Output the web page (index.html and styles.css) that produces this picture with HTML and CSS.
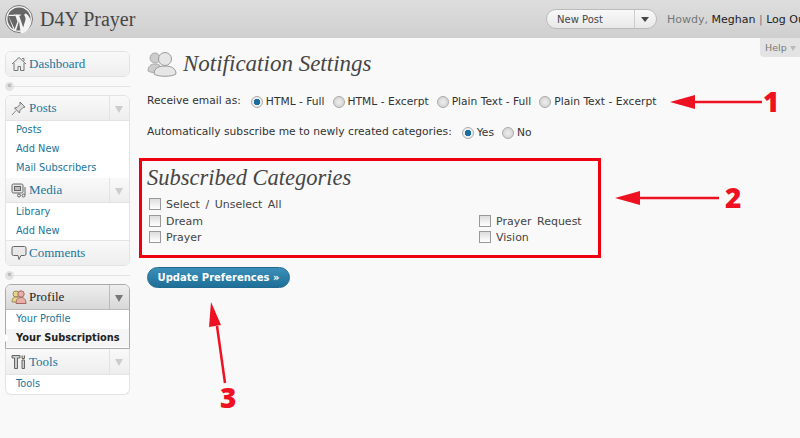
FILE: index.html
```html
<!DOCTYPE html>
<html lang="en">
<head>
    <meta charset="UTF-8">
    <meta name="viewport" content="width=device-width, initial-scale=1.0">
    <title>Notification Settings</title>
    <link rel="stylesheet" href="styles.css">
</head>
<body>
    <header class="topbar">
        <svg class="wp-logo" width="28" height="28" viewBox="0 0 28 28">
            <circle cx="14" cy="14" r="13.5" fill="#f4f4f4" stroke="#777"/>
            <circle cx="14" cy="14" r="11.5" fill="#666"/>
            <path d="M3 10l6 16 3.400-9.600-2-5.600-1.600-.2v-1h7v1l-1.600.2 4 11.600 2.200-7.400c.6-2.200-.6-3.600-1-4.400-.4-.8.2-2.200 1.600-2.200 3 2.200 4.600 5 4.600 8.600 0 5.600-3.800 10.600-9.800 12L14 16l-3.200 10.400" fill="#f4f4f4"/>
            <path d="M3.500 9.800h6.300v1.200h-6.300z" fill="#f4f4f4"/>
        </svg>
        <span class="site-name">D4Y Prayer</span>
        <div class="favorites">
            <span class="fav-label">New Post</span>
            <span class="fav-toggle"></span>
        </div>
        <div class="howdy">Howdy, <b>Meghan</b> | <b>Log Out</b></div>
    </header>

    <div class="wrap">
        <nav class="sidebar">
            <div class="menu-group">
                <div class="menu-head single">
                    <svg class="menu-icon" width="16" height="16" viewBox="0 0 16 16" fill="#eee" stroke="#777"><path d="M1 8l7-6.500 7 6.500M3 7v7.500h4v-4h2.500v4h3.500V7"/><path d="M11 2.500h2v2.500"/></svg>
                    <span>Dashboard</span>
                </div>
            </div>
            <div class="collapse-line"><span class="collapse-btn">«</span></div>

            <div class="menu-group">
                <div class="menu-head">
                    <svg class="menu-icon" width="16" height="16" viewBox="0 0 16 16"><path d="M9 2l5 5-2 .5-3 3-.5 2.500-5-5 2.500-.5 3-3z" fill="#ddd" stroke="#777"/><path d="M5 10.500l-4 4.500" stroke="#888"/></svg>
                    <span>Posts</span><i class="arrow-box"></i>
                </div>
                <ul class="submenu first-list">
                    <li>Posts</li>
                    <li>Add New</li>
                    <li>Mail Subscribers</li>
                </ul>
                <div class="menu-head">
                    <svg class="menu-icon" width="16" height="16" viewBox="0 0 16 16" fill="#e4e4e4" stroke="#666"><rect x="1" y="2" width="11" height="9" rx="1.500"/><rect x="3.500" y="4.500" width="6" height="4" fill="#bbb"/><path d="M14 5v8" fill="none"/><circle cx="12.500" cy="13.500" r="1.500"/><circle cx="8" cy="13.500" r="1.500"/></svg>
                    <span>Media</span><i class="arrow-box"></i>
                </div>
                <ul class="submenu">
                    <li>Library</li>
                    <li>Add New</li>
                </ul>
                <div class="menu-head single-low">
                    <svg class="menu-icon" width="16" height="16" viewBox="0 0 16 16"><path d="M2.500 1.500h11a1.500 1.500 0 0 1 1.500 1.500v6a1.500 1.500 0 0 1-1.500 1.500H10l-2 4-1-4H2.500A1.500 1.500 0 0 1 1 9V3a1.500 1.500 0 0 1 1.500-1.500z" fill="#e8e8e8" stroke="#666"/></svg>
                    <span>Comments</span>
                </div>
            </div>
            <div class="collapse-line second"><span class="collapse-btn">«</span></div>

            <div class="menu-group open-group">
                <div class="menu-head current">
                    <svg class="menu-icon" width="16" height="16" viewBox="0 0 16 16"><circle cx="5" cy="5" r="3" fill="#e8d58c" stroke="#a08a50"/><path d="M1 13c0-4 2-5 4-5s3 1 3 5z" fill="#e8d58c" stroke="#a08a50"/><circle cx="10" cy="5" r="3.200" fill="#eab0a8" stroke="#a06a60"/><path d="M5 14.500c0-4.500 2.500-6 5-6s5 1.500 5 6z" fill="#eab0a8" stroke="#a06a60"/></svg>
                    <span>Profile</span><i class="arrow-box"></i>
                </div>
                <ul class="submenu">
                    <li>Your Profile</li>
                    <li class="active">Your Subscriptions</li>
                </ul>
            </div>

            <div class="menu-group tools-group">
                <div class="menu-head">
                    <svg class="menu-icon" width="16" height="16" viewBox="0 0 16 16" fill="#ccc" stroke="#666"><path d="M1 1.500h8v2.500H6.500v10.500h-3V4H1z"/><path d="M11 6h2.500v8.500H11z"/><path d="M11 1.500v3h2.500v-3"/></svg>
                    <span>Tools</span><i class="arrow-box"></i>
                </div>
                <ul class="submenu">
                    <li>Tools</li>
                </ul>
            </div>
        </nav>

        <main class="content">
            <div class="help-tab">Help <i></i></div>
            <div class="page-title">
                <svg width="30" height="28" viewBox="0 0 30 28">
                    <circle cx="8" cy="8" r="5" fill="#ccc" stroke="#aaa"/>
                    <path d="M1 21c0-5 3-7 7-7s7 2 7 7c-3 2-11 2-14 0z" fill="#ccc" stroke="#aaa"/>
                    <circle cx="18" cy="9" r="6.500" fill="#e6e6e6" stroke="#999"/>
                    <path d="M7 24c0-6 5-8 11-8s11 2 11 8c-4 3-18 3-22 0z" fill="#e6e6e6" stroke="#999"/>
                </svg>
                <h2>Notification Settings</h2>
            </div>

            <div class="option-row">
                <span class="option-label">Receive email as:</span>
                <span class="radio on"></span><span class="radio-text">HTML - Full</span>
                <span class="radio"></span><span class="radio-text">HTML - Excerpt</span>
                <span class="radio"></span><span class="radio-text">Plain Text - Full</span>
                <span class="radio"></span><span class="radio-text">Plain Text - Excerpt</span>
            </div>
            <div class="option-row second-row">
                <span class="option-label">Automatically subscribe me to newly created categories:</span>
                <span class="radio on"></span><span class="radio-text">Yes</span>
                <span class="radio"></span><span class="radio-text">No</span>
            </div>

            <section class="categories">
                <h3>Subscribed Categories</h3>
                <div class="check-row select-all"><span class="check"></span>Select / Unselect All</div>
                <div class="check-grid">
                    <div class="check-row"><span class="check"></span>Dream</div>
                    <div class="check-row"><span class="check"></span>Prayer Request</div>
                    <div class="check-row"><span class="check"></span>Prayer</div>
                    <div class="check-row"><span class="check"></span>Vision</div>
                </div>
            </section>

            <button class="update-btn">Update Preferences »</button>
        </main>
    </div>

    <!-- red notes drawn over the screenshot -->
    <svg class="notes" width="800" height="438" viewBox="0 0 800 438">
        <g fill="#ee1122" stroke="#ee1122">
            <path d="M695 102H762" stroke-width="2.500"/>
            <path d="M670 102l25-7v14z" stroke="none"/>
            <path d="M640 198H719" stroke-width="2.500"/>
            <path d="M615 198l25-7v14z" stroke="none"/>
            <path d="M225 383L217 326" stroke-width="2.500" fill="none"/>
            <path d="M211 302L209 327l12-2z" stroke="none"/>
        </g>
        <g class="note-nums">
            <text x="763" y="112">1</text>
            <text x="725" y="208">2</text>
            <text x="220" y="408">3</text>
        </g>
    </svg>
</body>
</html>
```

FILE: styles.css
```css
* { box-sizing: border-box; }
html, body { margin: 0; height: 438px; overflow: hidden; }
body { background: #f9f9f9; font-family: "DejaVu Sans", Verdana, sans-serif; font-size: 11px; color: #333; position: relative; }

.topbar { height: 38px; display: flex; align-items: center; background: linear-gradient(#dedede, #cfcfcf); padding-left: 5px; }
.wp-logo { flex: none; }
.site-name { font-family: "Liberation Serif", Georgia, serif; font-size: 20px; color: #464646; margin-left: 7px; }
.favorites { margin-left: auto; width: 111px; height: 20px; display: flex; align-items: center; border: 1px solid #bbb; border-radius: 10px; background: linear-gradient(#f9f9f9, #e8e8e8); color: #464646; font-size: 10px; }
.fav-label { flex: 1; padding-left: 10px; }
.fav-toggle { width: 22px; height: 18px; border-left: 1px solid #ccc; position: relative; }
.fav-toggle::after { content: ""; position: absolute; left: 6px; top: 7px; border: 4px solid transparent; border-top: 5px solid #464646; border-bottom: 0; }
.howdy { width: 133px; margin-left: 10px; white-space: nowrap; color: #777; font-size: 11px; overflow: hidden; }
.howdy b { font-weight: normal; color: #222; }

.wrap { display: flex; }
.sidebar { width: 125px; margin: 13px 0 0 5px; flex: none; }
.menu-group { border: 1px solid #e3e3e3; border-radius: 6px; background: #fff; overflow: hidden; }
.menu-head { height: 25px; display: flex; align-items: center; padding-left: 5px; background: linear-gradient(#f9f9f9, #eee); border-bottom: 1px solid #e3e3e3; font-family: "Liberation Serif", Georgia, serif; font-size: 13px; color: #21759b; position: relative; }
.menu-head.single { height: 24px; border-bottom: 0; }
.menu-head.single-low { border-top: 1px solid #e3e3e3; border-bottom: 0; }
.menu-icon { margin-right: 2px; flex: none; }
.arrow-box { position: absolute; right: 0; top: 0; width: 20px; height: 100%; border-left: 1px solid #e3e3e3; }
.arrow-box::after { content: ""; position: absolute; left: 5px; top: 10px; border: 4px solid transparent; border-top: 7px solid #ccc; border-bottom: 0; }
.submenu { list-style: none; margin: 0; padding: 0; color: #21759b; font-size: 9.800px; }
.submenu li { height: 18.500px; line-height: 18px; padding-left: 10px; }
.first-list li { height: 19px; }
.submenu li.active { background: #f5f5f5; color: #222; font-weight: bold; position: relative; }
.submenu li.active::before { content: ""; position: absolute; left: -1px; top: 5px; border: 4px solid transparent; border-left: 4px solid #fff; }

.collapse-line { height: 18px; position: relative; }
.collapse-line::before { content: ""; position: absolute; left: 0; right: 0; top: 9px; border-top: 1px solid #e3e3e3; }
.collapse-btn { position: absolute; left: 0; top: 5px; width: 9px; height: 9px; border-radius: 50%; background: #e3e3e3; color: #999; font-size: 8px; line-height: 8px; text-align: center; }
.collapse-line.second { height: 18px; }

.open-group { border-color: #aaa; border-bottom-left-radius: 0; border-bottom-right-radius: 0; overflow: visible; }
.menu-head.current { background: linear-gradient(#eee, #d8d8d8); color: #222; border-color: #bbb; border-radius: 5px 5px 0 0; }
.menu-head.current .arrow-box { border-color: #bbb; }
.menu-head.current .arrow-box::after { border-top-color: #777; }
.tools-group { border-top: 0; border-top-left-radius: 0; border-top-right-radius: 0; }
.tools-group .menu-head { height: 26px; }
.open-group .submenu { padding-bottom: 1px; }

.content { flex: 1; padding: 10px 0 0 9px; position: relative; }
.help-tab { position: absolute; top: 0; right: 0; width: 40px; height: 19px; background: #e3e3e3; border-radius: 0 0 0 4px; color: #777; font-size: 9.500px; line-height: 19px; padding-left: 5px; }
.help-tab i { display: inline-block; border: 3px solid transparent; border-top: 5px solid #bbb; border-bottom: 0; }
.page-title { display: flex; align-items: center; height: 32px; padding-left: 8px; }
.page-title h2 { margin: 0 0 0 6px; font-family: "Liberation Serif", Georgia, serif; font-style: italic; font-weight: normal; font-size: 23px; color: #464646; }

.option-row { display: flex; align-items: center; padding-left: 8px; margin-top: 11px; height: 20px; font-size: 10.700px; }
.second-row { margin-top: 11px; }
.option-label { margin-right: 10px; position: relative; top: -1px; }
.radio { width: 12px; height: 12px; border-radius: 50%; border: 1px solid #aaa; background: radial-gradient(#eee, #ccc); margin-right: 3px; position: relative; top: 1px; }
.radio.on { background: radial-gradient(#1a6fa0 0 3px, #eee 3.500px); }
.radio-text { margin-right: 8px; }

.categories { width: 462px; height: 100px; margin-top: 16px; border: 3px solid #ee0011; padding: 4px 0 0 5px; }
.categories h3 { margin: 0 0 5px; font-family: "Liberation Serif", Georgia, serif; font-style: italic; font-weight: normal; font-size: 22.500px; color: #464646; }
.check-row { display: flex; align-items: center; height: 16px; font-size: 11px; color: #444; word-spacing: 2px; }
.check { width: 12px; height: 12px; border: 1px solid #999; background: linear-gradient(#ddd, #fff); margin: 0 5px 0 2px; }
.select-all { margin-bottom: 1px; }
.check-grid { display: grid; grid-template-columns: 330px 1fr; }

.update-btn { display: block; margin: 9px 0 0 8px; width: 143px; height: 21px; border: 1px solid #1f6a8e; border-radius: 11px; background: linear-gradient(#3a8fb8, #1f6f98); color: #fff; font-family: "DejaVu Sans", Verdana, sans-serif; font-size: 10px; font-weight: bold; padding: 0; }

.notes { position: absolute; left: 0; top: 0; pointer-events: none; }
.note-nums text { font-family: "Open Sans", "DejaVu Sans", sans-serif; font-weight: 800; font-size: 28px; fill: #ee1122; }
```
